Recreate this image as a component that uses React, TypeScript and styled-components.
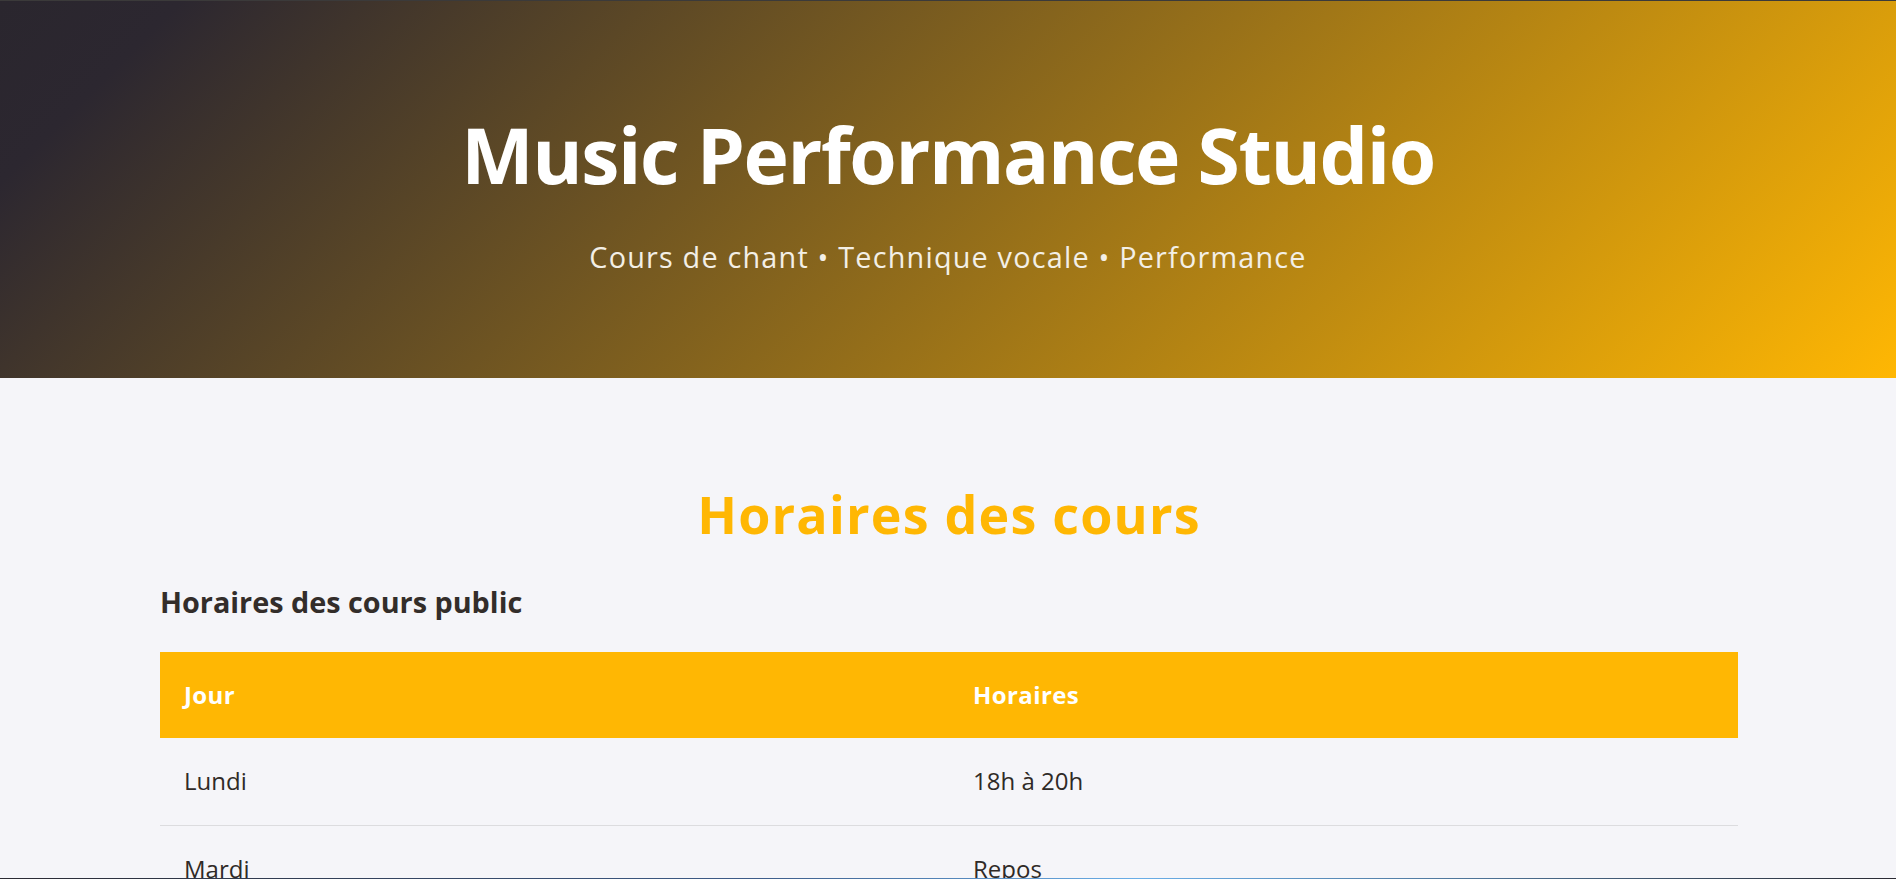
import React from "react";
import styled, { createGlobalStyle } from "styled-components";

const GlobalStyle = createGlobalStyle`
  * { box-sizing: border-box; }
  html, body {
    margin: 0;
    padding: 0;
    background: #f5f5f9;
    font-family: "Open Sans", "Liberation Sans", sans-serif;
    color: #2f2a27;
  }
`;

interface Slot {
  day: string;
  hours: string;
}

const schedule: Slot[] = [
  { day: "Lundi", hours: "18h à 20h" },
  { day: "Mardi", hours: "Repos" },
  { day: "Mercredi", hours: "18h à 20h" },
  { day: "Jeudi", hours: "Repos" },
  { day: "Vendredi", hours: "18h à 21h" },
];

export default function App() {
  return (
    <>
      <GlobalStyle />
      <Hero>
        <Title>Music Performance Studio</Title>
        <Tagline>Cours de chant • Technique vocale • Performance</Tagline>
      </Hero>
      <Main>
        <SectionTitle>Horaires des cours</SectionTitle>
        <SubTitle>Horaires des cours public</SubTitle>
        <Table>
          <thead>
            <tr>
              <HeadCell>Jour</HeadCell>
              <HeadCell>Horaires</HeadCell>
            </tr>
          </thead>
          <tbody>
            {schedule.map((s) => (
              <Row key={s.day}>
                <Cell>{s.day}</Cell>
                <Cell>{s.hours}</Cell>
              </Row>
            ))}
          </tbody>
        </Table>
      </Main>
      <BottomEdge />
    </>
  );
}

const Hero = styled.header`
  border-top: 1px solid #3b3a3a;
  height: 378px;
  padding: 108px 24px 0;
  display: flex;
  flex-direction: column;
  align-items: center;
  text-align: center;
  color: #ffffff;
  background: linear-gradient(135deg, #2a262e 0%, #2c2730 8%, #ffb703 100%);
`;

const Title = styled.h1`
  margin: 0;
  font-size: 76.8px;
  line-height: 1.2;
  font-weight: 700;
  letter-spacing: -1.4px;
`;

const Tagline = styled.p`
  margin: 34px 0 0;
  font-size: 28.8px;
  line-height: 1.5;
  font-weight: 400;
  letter-spacing: 1.2px;
  color: #f3efe6;
`;

const Main = styled.main`
  padding: 105px 158px 0 160px;
`;

const SectionTitle = styled.h2`
  margin: 0;
  text-align: center;
  font-size: 52px;
  line-height: 1.2;
  font-weight: 700;
  letter-spacing: 1.2px;
  color: #ffb703;
`;

const SubTitle = styled.h3`
  margin: 40px 0 32px;
  font-size: 28.8px;
  line-height: 1.2;
  font-weight: 700;
  letter-spacing: 0px;
  color: #332d2a;
`;

const Table = styled.table`
  width: 100%;
  border-collapse: collapse;
  table-layout: fixed;
`;

const HeadCell = styled.th`
  background: #ffb703;
  color: #ffffff;
  text-align: left;
  padding: 24px;
  font-size: 24px;
  line-height: 1.6;
  font-weight: 700;
  letter-spacing: 0.4px;
`;

const Row = styled.tr`
  border-bottom: 1px solid #dcdcdf;
`;

const Cell = styled.td`
  padding: 24px;
  font-size: 24px;
  line-height: 1.6;
  font-weight: 400;
  color: #2f2a27;
`;

const BottomEdge = styled.div`
  position: fixed;
  left: 0;
  right: 0;
  bottom: 0;
  height: 1px;
  background: linear-gradient(90deg, #2a2a33 0%, #3d5c8a 40%, #6aaee8 60%, #2a2a33 100%);
`;
